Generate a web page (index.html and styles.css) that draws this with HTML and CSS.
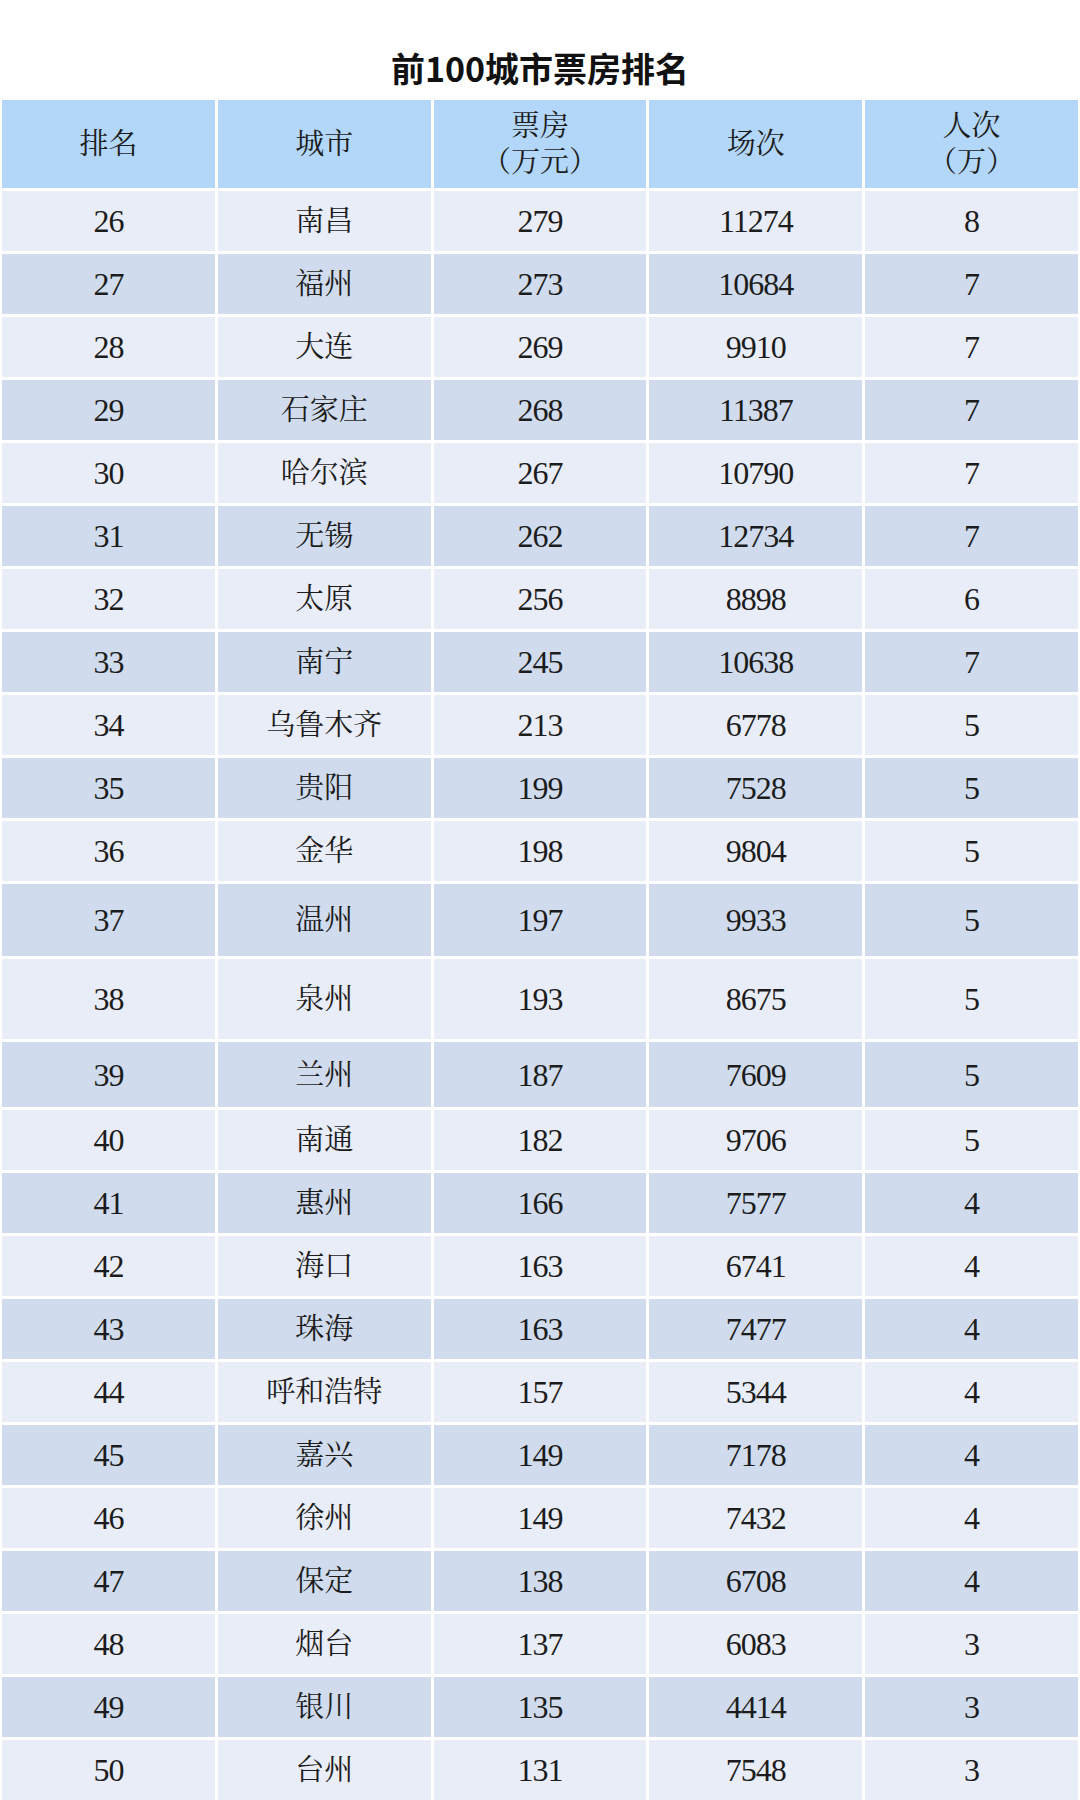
FILE: index.html
```html
<!DOCTYPE html>
<html lang="zh-CN">
<head>
<meta charset="utf-8">
<title>前100城市票房排名</title>
<link rel="stylesheet" href="styles.css">
</head>
<body>
<div class="page">
  <h1 class="title">前100城市票房排名</h1>
  <table class="rank">
    <thead>
      <tr>
        <th>排名</th>
        <th>城市</th>
        <th>票房<br>（万元）</th>
        <th>场次</th>
        <th>人次<br>（万）</th>
      </tr>
    </thead>
    <tbody>
      <tr class="light"><td>26</td><td>南昌</td><td>279</td><td>11274</td><td>8</td></tr>
      <tr class="dark"><td>27</td><td>福州</td><td>273</td><td>10684</td><td>7</td></tr>
      <tr class="light"><td>28</td><td>大连</td><td>269</td><td>9910</td><td>7</td></tr>
      <tr class="dark"><td>29</td><td>石家庄</td><td>268</td><td>11387</td><td>7</td></tr>
      <tr class="light"><td>30</td><td>哈尔滨</td><td>267</td><td>10790</td><td>7</td></tr>
      <tr class="dark"><td>31</td><td>无锡</td><td>262</td><td>12734</td><td>7</td></tr>
      <tr class="light"><td>32</td><td>太原</td><td>256</td><td>8898</td><td>6</td></tr>
      <tr class="dark"><td>33</td><td>南宁</td><td>245</td><td>10638</td><td>7</td></tr>
      <tr class="light"><td>34</td><td>乌鲁木齐</td><td>213</td><td>6778</td><td>5</td></tr>
      <tr class="dark"><td>35</td><td>贵阳</td><td>199</td><td>7528</td><td>5</td></tr>
      <tr class="light"><td>36</td><td>金华</td><td>198</td><td>9804</td><td>5</td></tr>
      <tr class="dark tall-a"><td>37</td><td>温州</td><td>197</td><td>9933</td><td>5</td></tr>
      <tr class="light tall-b"><td>38</td><td>泉州</td><td>193</td><td>8675</td><td>5</td></tr>
      <tr class="dark tall-c"><td>39</td><td>兰州</td><td>187</td><td>7609</td><td>5</td></tr>
      <tr class="light"><td>40</td><td>南通</td><td>182</td><td>9706</td><td>5</td></tr>
      <tr class="dark"><td>41</td><td>惠州</td><td>166</td><td>7577</td><td>4</td></tr>
      <tr class="light"><td>42</td><td>海口</td><td>163</td><td>6741</td><td>4</td></tr>
      <tr class="dark"><td>43</td><td>珠海</td><td>163</td><td>7477</td><td>4</td></tr>
      <tr class="light"><td>44</td><td>呼和浩特</td><td>157</td><td>5344</td><td>4</td></tr>
      <tr class="dark"><td>45</td><td>嘉兴</td><td>149</td><td>7178</td><td>4</td></tr>
      <tr class="light"><td>46</td><td>徐州</td><td>149</td><td>7432</td><td>4</td></tr>
      <tr class="dark"><td>47</td><td>保定</td><td>138</td><td>6708</td><td>4</td></tr>
      <tr class="light"><td>48</td><td>烟台</td><td>137</td><td>6083</td><td>3</td></tr>
      <tr class="dark"><td>49</td><td>银川</td><td>135</td><td>4414</td><td>3</td></tr>
      <tr class="light"><td>50</td><td>台州</td><td>131</td><td>7548</td><td>3</td></tr>
    </tbody>
  </table>
</div>
</body>
</html>
```

FILE: styles.css
```css
html, body {
  margin: 0;
  padding: 0;
  background: #ffffff;
}

.page {
  width: 1080px;
  overflow: hidden;
}

.title {
  margin: 0;
  padding: 48px 0 9px;
  height: 40px;
  line-height: 40px;
  text-align: center;
  font-family: "Noto Sans CJK SC", "Noto Sans", sans-serif;
  font-weight: 700;
  font-size: 34px;
  color: #111111;
}

.rank {
  width: calc(100% + 2px);
  margin-left: -1px;
  border-collapse: separate;
  border-spacing: 3px;
  table-layout: fixed;
  font-family: "Liberation Serif", "Noto Serif CJK SC", "Noto Sans CJK SC", serif;
  color: #1c1c1c;
}

.rank th,
.rank td {
  padding: 0;
  text-align: center;
  vertical-align: middle;
}

.rank th {
  height: 88px;
  background: #b3d7f8;
  font-weight: 400;
  font-size: 29px;
  line-height: 36px;
}

.rank td {
  height: 60px;
  font-size: 32px;
  line-height: 36px;
  letter-spacing: -1px;
}

.rank td:nth-child(2) {
  font-size: 29px;
  letter-spacing: 0;
}

.rank tr.light td {
  background: #e9edf7;
}

.rank tr.dark td {
  background: #d0dcee;
}

.rank tr.tall-a td {
  height: 72px;
}

.rank tr.tall-b td {
  height: 80px;
}

.rank tr.tall-c td {
  height: 65px;
}
```
